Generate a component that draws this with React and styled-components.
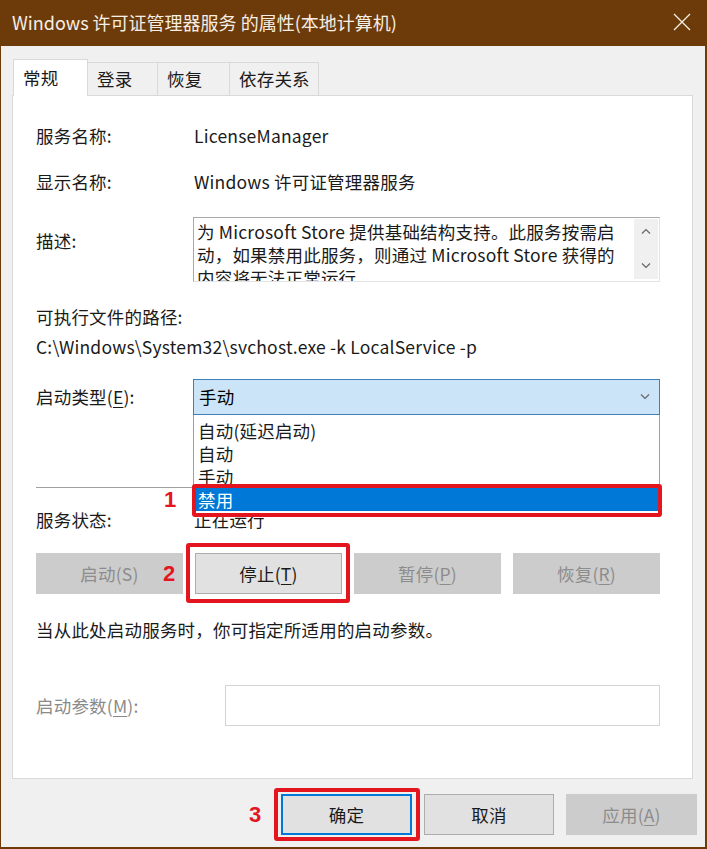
import styled, { createGlobalStyle } from 'styled-components';

const FONT = `"Noto Sans CJK SC", "Noto Sans", sans-serif`;
const RED = '#e3161f';

const GlobalStyle = createGlobalStyle`
  html, body {
    margin: 0;
    padding: 0;
    background: #6d3b0a;
  }
  body {
    font-family: ${FONT};
    font-size: 17.5px;
    letter-spacing: 0.2px;
    color: #000;
  }
`;

const Window = styled.div`
  width: 707px;
  height: 849px;
  box-sizing: border-box;
  background: #6d3b0a;
  padding: 0 2px 2px 1px;
  display: flex;
  flex-direction: column;
`;

const TitleBar = styled.div`
  height: 47px;
  display: flex;
  align-items: center;
  justify-content: space-between;
  padding: 0 14px 2px 11px;
  box-sizing: border-box;
`;

const Title = styled.div`
  color: #f7eee4;
  font-size: 18px;
  letter-spacing: 0;
  line-height: 24px;
`;

const Body = styled.div`
  flex: 1;
  background: #f0f0f0;
  padding: 13px 12px 12px 11px;
  display: flex;
  flex-direction: column;
`;

const TabStrip = styled.div`
  display: flex;
  align-items: flex-end;
  padding-left: 1px;
  height: 37px;
  position: relative;
  z-index: 1;
  margin-bottom: -1px;
`;

const Tab = styled.div`
  width: ${(p) => p.$w}px;
  height: ${(p) => (p.$active ? 37 : 34)}px;
  box-sizing: border-box;
  border: 1px solid #d9d9d9;
  border-bottom: ${(p) => (p.$active ? 'none' : '1px solid #d9d9d9')};
  border-left: ${(p) => (p.$active ? '1px solid #d9d9d9' : 'none')};
  background: ${(p) => (p.$active ? '#fff' : '#f0f0f0')};
  padding: ${(p) => (p.$active ? '5px 0 0 9px' : '3px 0 0 9px')};
  line-height: 26px;
  color: #1a1a1a;
`;

const Panel = styled.div`
  background: #fff;
  border: 1px solid #d9d9d9;
  padding: 28px 32px 52px 23px;
  display: flex;
  flex-direction: column;
`;

const Row = styled.div`
  display: flex;
  align-items: ${(p) => p.$align || 'center'};
  margin-top: ${(p) => p.$mt || 0}px;
  position: relative;
`;

const Label = styled.div`
  width: ${(p) => p.$w || 157}px;
  flex-shrink: 0;
  line-height: 24px;
  padding-top: ${(p) => p.$pt || 0}px;
  color: ${(p) => (p.$disabled ? '#8a8a8a' : '#1a1a1a')};
`;

const Value = styled.div`
  line-height: 24px;
  padding-left: 1px;
  color: #1a1a1a;
  white-space: nowrap;
`;

const TextLine = styled.div`
  line-height: 24px;
  margin-top: ${(p) => p.$mt || 0}px;
  color: #1a1a1a;
  white-space: nowrap;
`;

const Mnemonic = styled.span`
  text-decoration: underline;
  text-underline-offset: 3px;
  text-decoration-thickness: 1px;
`;

const DescBox = styled.div`
  flex: 1;
  height: 65px;
  box-sizing: border-box;
  border: 1px solid #a9a9a9;
  border-right-color: #e3e3e3;
  border-bottom-color: #e3e3e3;
  display: flex;
  overflow: hidden;
`;

const DescText = styled.div`
  flex: 1;
  padding: 2px 0 0 3px;
  line-height: 23px;
  color: #1a1a1a;
  white-space: nowrap;
`;

const ScrollTrack = styled.div`
  width: 24px;
  margin: 1px 1px 2px 0;
  background: #f0f0f0;
  display: flex;
  flex-direction: column;
  justify-content: space-between;
  align-items: center;
  padding: 9px 0 10px;
  box-sizing: border-box;
`;

const SelectWrap = styled.div`
  flex: 1;
  position: relative;
`;

const SelectBox = styled.div`
  height: 36px;
  box-sizing: border-box;
  background: #cce4f7;
  border: 1px solid #3f80b8;
  display: flex;
  align-items: center;
  justify-content: space-between;
  padding: 0 9px 0 5px;
  line-height: 24px;
`;

const DropList = styled.div`
  position: absolute;
  top: 100%;
  left: 0;
  right: 0;
  background: #fff;
  border: 1px solid #a0a0a0;
  border-top: none;
  padding: 4px 0 4px;
  z-index: 2;
`;

const Option = styled.div`
  height: 23px;
  line-height: 23px;
  padding-left: 4px;
  background: ${(p) => (p.$selected ? '#0078d7' : 'transparent')};
  color: ${(p) => (p.$selected ? '#fff' : '#1a1a1a')};
  position: relative;
`;

const Separator = styled.div`
  height: 1px;
  background: #a0a0a0;
  margin-top: ${(p) => p.$mt}px;
`;

const ButtonRow = styled.div`
  display: grid;
  grid-template-columns: repeat(4, 1fr);
  gap: 12px;
  margin-top: 21px;
`;

const Button = styled.div`
  height: 41px;
  width: ${(p) => (p.$w ? `${p.$w}px` : 'auto')};
  box-sizing: border-box;
  display: flex;
  align-items: center;
  justify-content: center;
  position: relative;
  background: ${(p) => (p.$disabled ? '#cccccc' : '#e1e1e1')};
  border: 1px solid ${(p) => (p.$disabled ? '#cccccc' : p.$focused ? '#0078d7' : '#adadad')};
  box-shadow: ${(p) => (p.$focused ? 'inset 0 0 0 1px #0078d7' : 'none')};
  color: ${(p) => (p.$disabled ? '#8c8c8c' : '#1a1a1a')};
`;

const InputBox = styled.div`
  flex: 1;
  height: 41px;
  box-sizing: border-box;
  border: 1px solid #d4d4d4;
  background: #fff;
`;

const Footer = styled.div`
  display: flex;
  justify-content: flex-end;
  gap: 12px;
  margin: 15px -4px 0 0;
`;

/* red annotation frame drawn over a control */
const Frame = styled.div`
  position: absolute;
  top: ${(p) => p.$t}px;
  right: ${(p) => p.$r}px;
  bottom: ${(p) => p.$b}px;
  left: ${(p) => p.$l}px;
  border: 4px solid ${RED};
  border-radius: 3px;
  pointer-events: none;
`;

const StepNo = styled.div`
  position: absolute;
  left: ${(p) => p.$l}px;
  top: 50%;
  transform: translateY(-50%);
  color: ${RED};
  font-family: "Liberation Sans", Arial, sans-serif;
  font-weight: bold;
  font-size: 22px;
  letter-spacing: 0;
  line-height: 24px;
`;

const Chevron = ({ up }) => (
  <svg width="10" height="6" viewBox="0 0 10 6">
    <path
      d={up ? 'M1 5.5L5 1.5L9 5.5' : 'M1 0.5L5 4.5L9 0.5'}
      fill="none"
      stroke="#666"
      strokeWidth="1.2"
    />
  </svg>
);

const CloseIcon = () => (
  <svg width="18" height="18" viewBox="0 0 18 18">
    <path d="M1 1L17 17M17 1L1 17" stroke="#f7eee4" strokeWidth="1.3" />
  </svg>
);

const description = [
  '为 Microsoft Store 提供基础结构支持。此服务按需启',
  '动，如果禁用此服务，则通过 Microsoft Store 获得的',
  '内容将无法正常运行。',
];

export default function App() {
  return (
    <>
      <GlobalStyle />
      <Window>
        <TitleBar>
          <Title>Windows 许可证管理器服务 的属性(本地计算机)</Title>
          <CloseIcon />
        </TitleBar>
        <Body>
          <TabStrip>
            <Tab $active $w={75}>常规</Tab>
            <Tab $w={70}>登录</Tab>
            <Tab $w={72}>恢复</Tab>
            <Tab $w={89}>依存关系</Tab>
          </TabStrip>
          <Panel>
            <Row>
              <Label>服务名称:</Label>
              <Value>LicenseManager</Value>
            </Row>
            <Row $mt={22}>
              <Label>显示名称:</Label>
              <Value>Windows 许可证管理器服务</Value>
            </Row>
            <Row $mt={23} $align="flex-start">
              <Label $pt={12}>描述:</Label>
              <DescBox>
                <DescText>
                  {description.map((line) => (
                    <div key={line}>{line}</div>
                  ))}
                </DescText>
                <ScrollTrack>
                  <Chevron up />
                  <Chevron />
                </ScrollTrack>
              </DescBox>
            </Row>
            <TextLine $mt={23}>可执行文件的路径:</TextLine>
            <TextLine $mt={6}>C:\Windows\System32\svchost.exe -k LocalService -p</TextLine>
            <Row $mt={20}>
              <Label>
                启动类型(<Mnemonic>E</Mnemonic>):
              </Label>
              <SelectWrap>
                <SelectBox>
                  <span>手动</span>
                  <Chevron />
                </SelectBox>
                <DropList>
                  <Option>自动(延迟启动)</Option>
                  <Option>自动</Option>
                  <Option>手动</Option>
                  <Option $selected>
                    禁用
                    <Frame $t={-4} $r={-3} $b={-6} $l={-2} />
                    <StepNo $l={-30}>1</StepNo>
                  </Option>
                </DropList>
              </SelectWrap>
            </Row>
            <Separator $mt={72} />
            <Row $mt={20}>
              <Label>服务状态:</Label>
              <Value>正在运行</Value>
            </Row>
            <ButtonRow>
              <Button $disabled>启动(S)</Button>
              <Button>
                停止(<Mnemonic>T</Mnemonic>)
                <Frame $t={-11} $r={-9} $b={-10} $l={-10} />
                <StepNo $l={-33}>2</StepNo>
              </Button>
              <Button $disabled>
                暂停(<Mnemonic>P</Mnemonic>)
              </Button>
              <Button $disabled>
                恢复(<Mnemonic>R</Mnemonic>)
              </Button>
            </ButtonRow>
            <TextLine $mt={24}>当从此处启动服务时，你可指定所适用的启动参数。</TextLine>
            <Row $mt={43}>
              <Label $w={189} $disabled>
                启动参数(<Mnemonic>M</Mnemonic>):
              </Label>
              <InputBox />
            </Row>
          </Panel>
          <Footer>
            <Button $w={131} $focused>
              确定
              <Frame $t={-7} $r={-9} $b={-7} $l={-8} />
              <StepNo $l={-33}>3</StepNo>
            </Button>
            <Button $w={130}>取消</Button>
            <Button $w={131} $disabled>
              应用(<Mnemonic>A</Mnemonic>)
            </Button>
          </Footer>
        </Body>
      </Window>
    </>
  );
}
